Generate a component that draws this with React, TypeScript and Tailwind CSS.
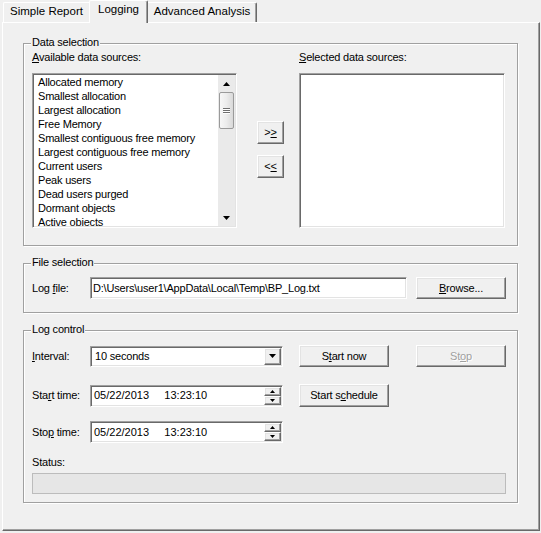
import type { ReactNode } from 'react'

const raised =
  'border border-t-white border-l-white border-r-[#696969] border-b-[#696969] bg-[#f0f0f0] shadow-[inset_-1px_-1px_0_#a0a0a0,inset_1px_1px_0_#e3e3e3]'
const sunken =
  'border border-t-[#a0a0a0] border-l-[#a0a0a0] border-r-white border-b-white bg-white shadow-[inset_1px_1px_0_#696969,inset_-1px_-1px_0_#e3e3e3]'
const etched = 'border border-[#a0a0a0] shadow-[1px_1px_0_#fff,inset_1px_1px_0_#fff]'

const sources = [
  'Allocated memory',
  'Smallest allocation',
  'Largest allocation',
  'Free Memory',
  'Smallest contiguous free memory',
  'Largest contiguous free memory',
  'Current users',
  'Peak users',
  'Dead users purged',
  'Dormant objects',
  'Active objects',
]

function Tri({ dir, w = 7, h = 4 }: { dir: 'up' | 'down'; w?: number; h?: number }) {
  const pts = dir === 'up' ? `0,${h} ${w / 2},0 ${w},${h}` : `0,0 ${w},0 ${w / 2},${h}`
  return (
    <svg width={w} height={h} viewBox={`0 0 ${w} ${h}`} className="block">
      <polygon points={pts} fill="#000" />
    </svg>
  )
}

function VScroll() {
  return (
    <div className="flex h-full w-[17px] shrink-0 flex-col bg-[#eaeaea]">
      <div className="flex h-[17px] items-center justify-center">
        <Tri dir="up" w={7} h={4} />
      </div>
      <div className="mx-[1px] flex h-[37px] flex-col items-center justify-center gap-[1px] rounded-[2px] border border-[#9a9a9a] bg-linear-to-r from-[#f7f7f7] via-[#ececec] to-[#d9d9d9]">
        <div className="h-[1px] w-[7px] bg-[#6f6f6f] shadow-[0_1px_0_#fff]" />
        <div className="h-[1px] w-[7px] bg-[#6f6f6f] shadow-[0_1px_0_#fff]" />
        <div className="h-[1px] w-[7px] bg-[#6f6f6f] shadow-[0_1px_0_#fff]" />
      </div>
      <div className="flex-1" />
      <div className="flex h-[17px] items-center justify-center">
        <Tri dir="down" w={7} h={4} />
      </div>
    </div>
  )
}

function Group({ label, className, children }: { label: string; className: string; children: ReactNode }) {
  return (
    <div className={`relative w-[495px] ${etched} ${className}`}>
      <span className="absolute left-[7px] top-[-8px] bg-[#f0f0f0] px-[1px]">{label}</span>
      {children}
    </div>
  )
}

function Btn({ className, children, disabled }: { className: string; children: ReactNode; disabled?: boolean }) {
  return (
    <div
      className={`flex items-center justify-center ${raised} ${className} ${
        disabled ? 'text-[#a0a0a0] [text-shadow:1px_1px_0_#fff]' : ''
      }`}
    >
      <span>{children}</span>
    </div>
  )
}

function DateField({ value }: { value: string }) {
  return (
    <div className={`flex h-[22px] w-[193px] items-center p-[1px] ${sunken}`}>
      <span className="flex-1 whitespace-pre pl-[2px] tracking-normal">{value}</span>
      <div className="flex h-full w-[17px] flex-col">
        <div className={`flex flex-1 items-center justify-center ${raised}`}>
          <Tri dir="up" w={5} h={3} />
        </div>
        <div className={`flex flex-1 items-center justify-center ${raised}`}>
          <Tri dir="down" w={5} h={3} />
        </div>
      </div>
    </div>
  )
}

export default function App() {
  return (
    <div className="h-[533px] w-[541px] overflow-hidden bg-[#f0f0f0] font-['Liberation_Sans',sans-serif] text-[11px] leading-[13px] tracking-[-0.2px] text-black">
      <div className="ml-[2px] w-[538px]">
        {/* tabs */}
        <div className="flex h-[22px] items-end pl-[1px] text-[11.5px] tracking-normal">
          <div className="flex h-[20px] w-[86px] justify-center rounded-tl-[2px] border-l border-t border-white pt-[2px]">
            Simple Report
          </div>
          <div className="relative z-10 mb-[-1px] flex h-[23px] w-[59px] justify-center rounded-t-[2px] border-l border-t border-r border-l-white border-t-white border-r-[#696969] bg-[#f0f0f0] pt-[2px] shadow-[inset_-1px_0_0_#a0a0a0]">
            Logging
          </div>
          <div className="flex h-[20px] w-[109px] justify-center rounded-tr-[2px] border-t border-r border-t-white border-r-[#696969] pt-[2px] shadow-[inset_-1px_0_0_#a0a0a0]">
            Advanced Analysis
          </div>
        </div>

        {/* tab page */}
        <div className="h-[509px] border border-l-white border-t-white border-r-[#696969] border-b-[#696969] px-[20px] pt-[20px] shadow-[inset_-1px_-1px_0_#a0a0a0]">
          <Group label="Data selection" className="h-[203px]">
            <div className="flex pl-[8px] pt-[7px]">
              <div className="flex flex-col">
                <div>
                  <u>A</u>vailable data sources:
                </div>
                <div className={`mt-[9px] flex h-[155px] w-[205px] overflow-hidden p-[1px] ${sunken}`}>
                  <div className="flex-1 overflow-hidden pl-[4px] leading-[14px]">
                    {sources.map((s) => (
                      <div key={s} className="whitespace-nowrap">
                        {s}
                      </div>
                    ))}
                  </div>
                  <VScroll />
                </div>
              </div>
              <div className="ml-[20px] mt-[70px] flex flex-col gap-[11px]">
                <Btn className="h-[23px] w-[27px]">
                  &gt;<u>&gt;</u>
                </Btn>
                <Btn className="h-[23px] w-[27px]">
                  &lt;<u>&lt;</u>
                </Btn>
              </div>
              <div className="ml-[15px] flex flex-col">
                <div>
                  <u>S</u>elected data sources:
                </div>
                <div className={`mt-[9px] h-[155px] w-[206px] ${sunken}`} />
              </div>
            </div>
          </Group>

          <Group label="File selection" className="mt-[17px] h-[50px]">
            <div className="flex items-center pl-[8px] pt-[13px]">
              <div className="w-[58px]">
                Log <u>f</u>ile:
              </div>
              <div className={`flex h-[22px] w-[317px] items-center p-[1px] pl-[2px] ${sunken}`}>
                D:\Users\user1\AppData\Local\Temp\BP_Log.txt
              </div>
              <Btn className="ml-[9px] h-[22px] w-[90px]">
                <u>B</u>rowse...
              </Btn>
            </div>
          </Group>

          <Group label="Log control" className="mt-[17px] h-[173px]">
            <div className="flex flex-col pl-[8px] pt-[14px]">
              <div className="flex items-center">
                <div className="w-[58px]">
                  <u>I</u>nterval:
                </div>
                <div className={`flex h-[21px] w-[193px] items-center p-[1px] ${sunken}`}>
                  <span className="flex-1 pl-[3px]">10 seconds</span>
                  <div className={`flex h-full w-[17px] items-center justify-center ${raised}`}>
                    <Tri dir="down" w={7} h={4} />
                  </div>
                </div>
                <Btn className="ml-[16px] h-[22px] w-[90px]">
                  S<u>t</u>art now
                </Btn>
                <Btn className="ml-[27px] h-[22px] w-[90px]" disabled>
                  St<u>o</u>p
                </Btn>
              </div>

              <div className="mt-[17px] flex items-center">
                <div className="w-[58px]">
                  Sta<u>r</u>t time:
                </div>
                <DateField value="05/22/2013     13:23:10" />
                <Btn className="ml-[16px] h-[23px] w-[90px]">
                  Start s<u>c</u>hedule
                </Btn>
              </div>

              <div className="mt-[14px] flex items-center">
                <div className="w-[58px]">
                  Sto<u>p</u> time:
                </div>
                <DateField value="05/22/2013     13:23:10" />
              </div>

              <div className="mt-[13px]">Status:</div>
              <div className="mt-[4px] h-[21px] w-[474px] border border-[#bcbcbc] bg-[#e6e6e6]" />
            </div>
          </Group>
        </div>
      </div>
    </div>
  )
}
